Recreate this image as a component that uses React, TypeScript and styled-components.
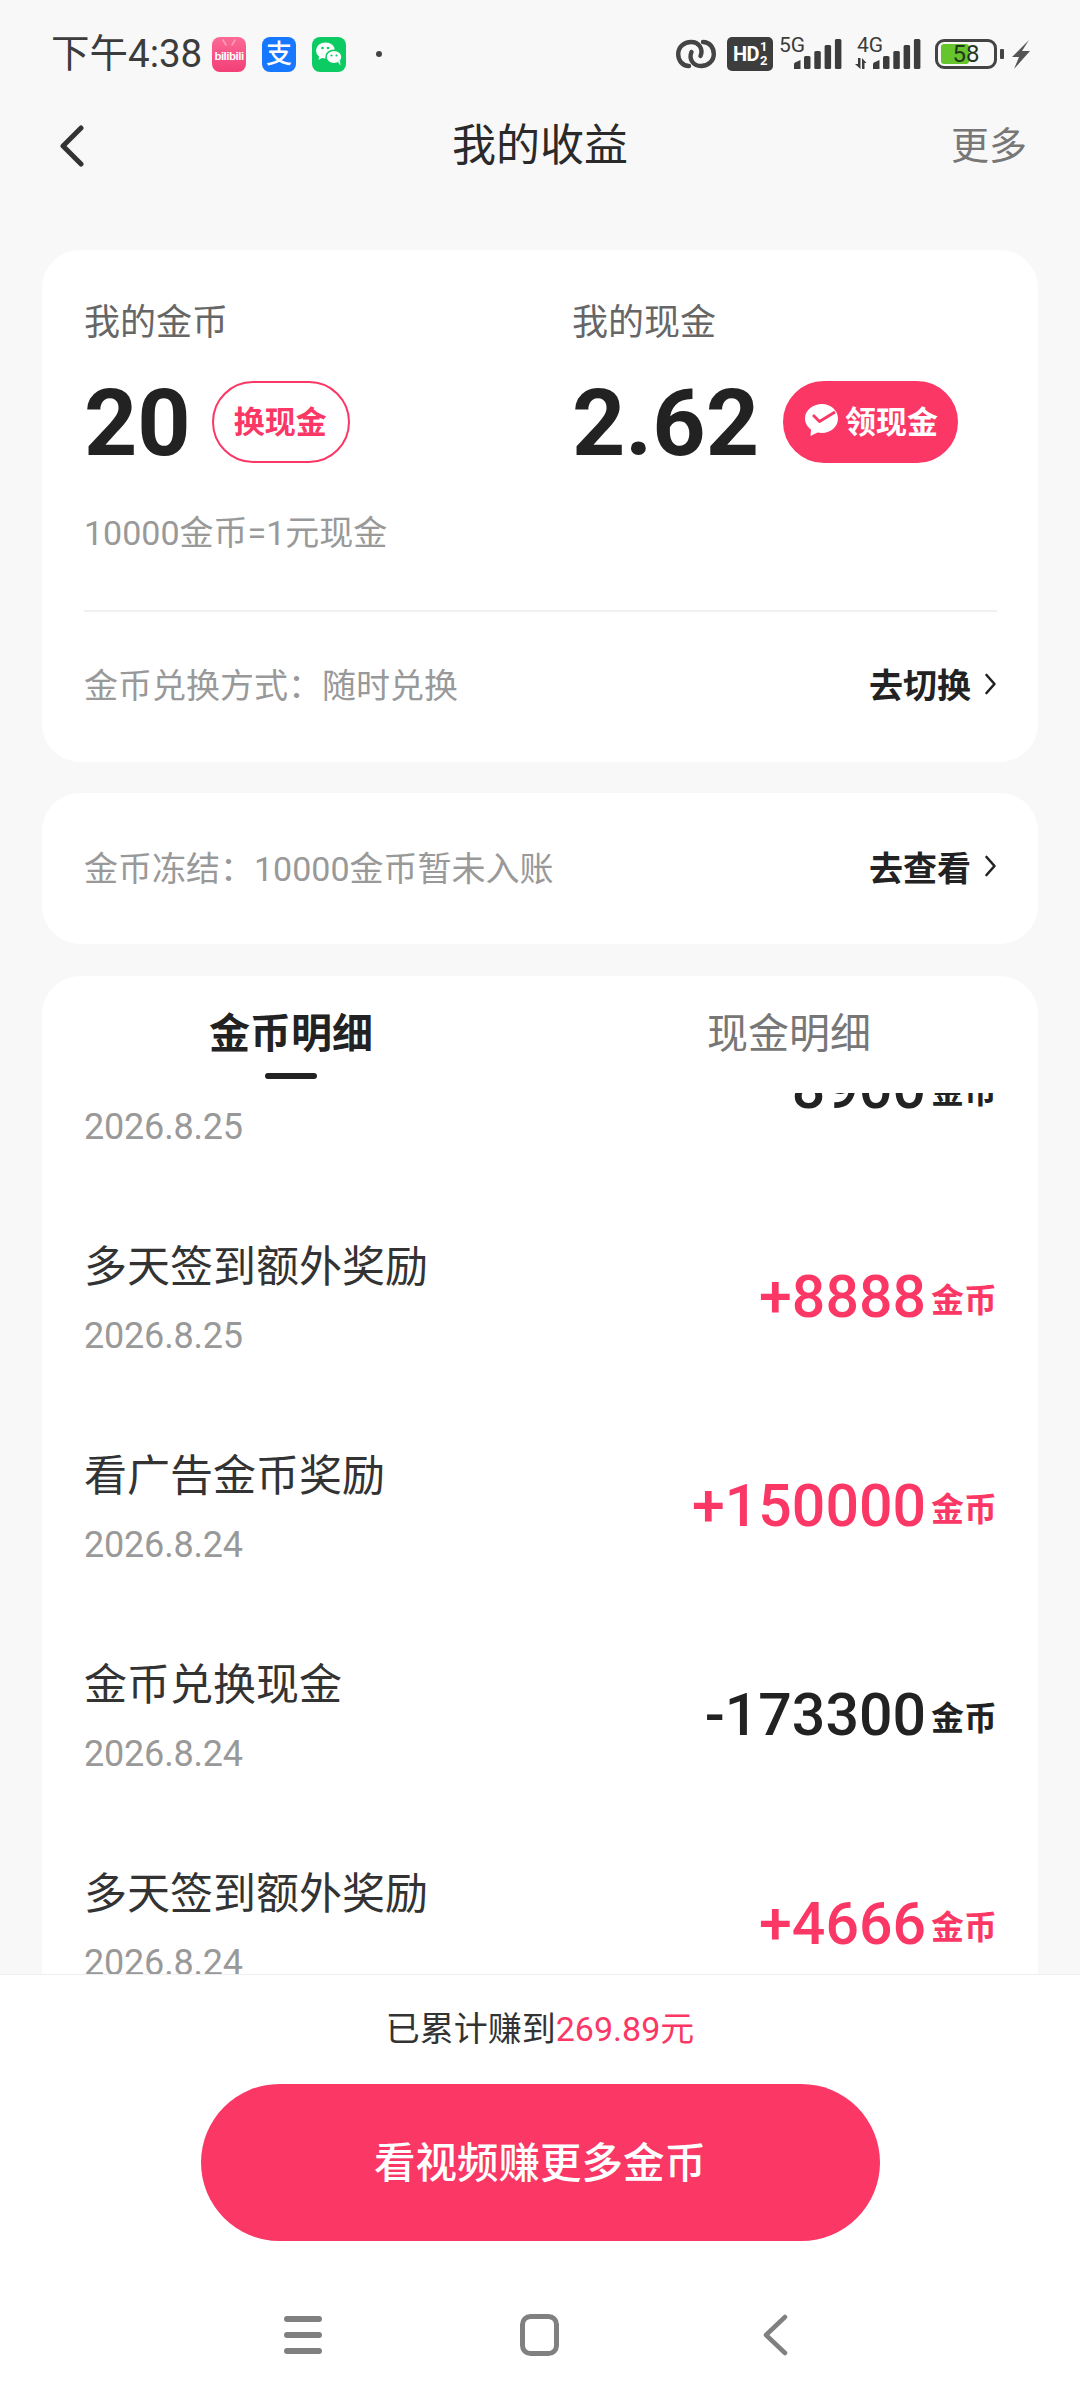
import React from 'react'
import styled, { createGlobalStyle } from 'styled-components'

const PINK = '#fb3766'
const STACK = 'Roboto, "Noto Sans CJK SC", sans-serif'

const Global = createGlobalStyle`
  html, body { margin: 0; padding: 0; background: #f8f8f8; }
  * { box-sizing: border-box; }
`

const Page = styled.div`
  width: 1080px;
  height: 2400px;
  display: flex;
  flex-direction: column;
  overflow: hidden;
  background: #f8f8f8;
  font-family: ${STACK};
  color: #333;
`

const StatusBar = styled.div`
  height: 108px;
  padding: 0 50px 0 51px;
  display: flex;
  align-items: center;
  justify-content: space-between;
`

const StatusLeft = styled.div`
  display: flex;
  align-items: center;
`

const StatusRight = styled.div`
  display: flex;
  align-items: center;
`

const Clock = styled.span`
  font-size: 38.5px;
  line-height: 44px;
  color: #3c3c3c;
  width: 161px;
  white-space: nowrap;
`

const AppIcon = styled.div<{ $bg: string; $gap?: number }>`
  width: 34px;
  height: 35px;
  border-radius: 8px;
  background: ${p => p.$bg};
  margin-right: ${p => p.$gap ?? 16}px;
  display: flex;
  align-items: center;
  justify-content: center;
  color: #fff;
  overflow: hidden;
`

const ZhiText = styled.span`
  font-size: 26px;
  font-weight: 500;
  line-height: 30px;
`

const Dot = styled.div`
  width: 6px;
  height: 6px;
  border-radius: 50%;
  background: #444;
  margin-left: 30px;
`

const LinkIcon = styled.svg`
  margin-right: 11px;
`

const HdBox = styled.div`
  width: 46px;
  height: 34px;
  margin-right: 6px;
  border-radius: 5px;
  background: #3d3d3d;
  color: #fff;
  display: flex;
  align-items: center;
  justify-content: center;
  font-size: 20px;
  font-weight: 700;
  letter-spacing: -0.5px;
`

const Half = styled.span`
  display: flex;
  flex-direction: column;
  font-size: 13px;
  line-height: 14px;
  margin-left: 1px;
`

const Signal = styled.div<{ $w: number; $gap: number }>`
  position: relative;
  width: ${p => p.$w}px;
  height: 34px;
  margin-right: ${p => p.$gap}px;
`

const NetLabel = styled.span<{ $left: number }>`
  position: absolute;
  left: ${p => p.$left}px;
  top: -2px;
  font-size: 21px;
  line-height: 20px;
  color: #3c3c3c;
  white-space: nowrap;
`

const SignalBars = styled.svg<{ $left: number }>`
  position: absolute;
  left: ${p => p.$left}px;
  top: 2px;
`

const Battery = styled.div`
  position: relative;
  width: 62px;
  height: 30px;
  border: 3.5px solid #444;
  border-radius: 9px;
  display: flex;
  align-items: center;
  justify-content: center;
`

const BatteryFill = styled.div<{ $pct: number }>`
  position: absolute;
  left: 3px;
  top: 2px;
  bottom: 2px;
  width: ${p => p.$pct}%;
  background: #66c42d;
  border-radius: 3px;
`

const BatteryText = styled.span`
  position: relative;
  font-size: 24px;
  line-height: 24px;
  color: #24361a;
`

const BatteryNub = styled.div`
  width: 4px;
  height: 10px;
  margin: 0 7px 0 3px;
  background: #444;
  border-radius: 1px;
`

const NavBar = styled.div`
  height: 74px;
  padding: 1px 53px 0 53px;
  display: grid;
  grid-template-columns: 1fr auto 1fr;
  align-items: center;
`

const BackIcon = styled.svg`
  margin-left: 7px;
`

const NavTitle = styled.h1`
  margin: 0;
  font-size: 44px;
  font-weight: 400;
  color: #2a2a2a;
  line-height: 60px;
`

const NavMore = styled.span`
  justify-self: end;
  font-size: 38px;
  color: #777;
  line-height: 50px;
`

const Content = styled.div`
  flex: 1;
  min-height: 0;
  padding: 68px 42px 0;
  display: flex;
  flex-direction: column;
  gap: 31px;
`

const Card = styled.section`
  background: #fff;
  border-radius: 38px;
  padding: 0 41px 0 42px;
`

const BalanceGrid = styled.div`
  padding-top: 53px;
  display: grid;
  grid-template-columns: 488px 1fr;
`

const Label = styled.div`
  font-size: 36px;
  line-height: 40px;
  color: #666;
`

const ValueRow = styled.div`
  margin-top: 38px;
  height: 82px;
  display: flex;
  align-items: center;
`

const BigNumber = styled.span`
  font-size: 93px;
  font-weight: 700;
  line-height: 82px;
  color: #222;
  padding-top: 4px;
`

const PillButton = styled.button<{ $solid?: boolean }>`
  height: 82px;
  margin-left: ${p => (p.$solid ? 24 : 21)}px;
  padding: 0 ${p => (p.$solid ? 18 : 21)}px 5px ${p => (p.$solid ? 19 : 20)}px;
  border-radius: 41px;
  border: 2px solid ${PINK};
  background: ${p => (p.$solid ? PINK : '#fff')};
  color: ${p => (p.$solid ? '#fff' : PINK)};
  font-family: ${STACK};
  font-size: 31px;
  font-weight: 700;
  display: flex;
  align-items: center;
  gap: 7px;
  white-space: nowrap;
`

const Rate = styled.div`
  margin-top: 50px;
  font-size: 34px;
  line-height: 40px;
  color: #999;
`

const Divider = styled.div`
  margin-top: 57px;
  height: 2px;
  background: #f0f0f0;
`

const LinkRow = styled.div<{ $h: number }>`
  height: ${p => p.$h}px;
  padding-bottom: ${p => (p.$h > 150 ? 5 : 7)}px;
  display: flex;
  align-items: center;
  justify-content: space-between;
`

const Hint = styled.span`
  font-size: 34px;
  color: #999;
`

const LinkAction = styled.span`
  display: flex;
  align-items: center;
  gap: 13px;
  font-size: 34px;
  font-weight: 700;
  color: #222;
`

const DetailCard = styled.section`
  flex: 1;
  min-height: 0;
  margin-top: 1px;
  background: #fff;
  border-radius: 38px 38px 0 0;
  display: flex;
  flex-direction: column;
`

const Tabs = styled.div`
  height: 117px;
  flex: none;
  display: flex;
`

const Tab = styled.div<{ $active?: boolean }>`
  flex: 1;
  padding-top: 33px;
  display: flex;
  flex-direction: column;
  align-items: center;
  font-size: 41px;
  line-height: 50px;
  font-weight: ${p => (p.$active ? 700 : 400)};
  color: ${p => (p.$active ? '#222' : '#777')};
`

const TabMark = styled.div`
  width: 52px;
  height: 6px;
  margin-top: 14px;
  border-radius: 3px;
  background: #222;
`

const List = styled.div`
  flex: 1;
  min-height: 0;
  overflow: hidden;
`

const ListInner = styled.div`
  margin-top: -110px;
`

const Row = styled.div`
  height: 209px;
  padding: 0 41px 0 42px;
  display: flex;
  align-items: center;
  justify-content: space-between;
`

const RowText = styled.div`
  padding-top: 4px;
  display: flex;
  flex-direction: column;
  gap: 14px;
`

const RowTitle = styled.div`
  font-size: 43px;
  line-height: 60px;
  color: #333;
`

const RowDate = styled.div`
  font-size: 36px;
  line-height: 50px;
  letter-spacing: -0.2px;
  color: #999;
`

const Amount = styled.div<{ $plus: boolean }>`
  display: flex;
  align-items: center;
  gap: 5px;
  color: ${p => (p.$plus ? PINK : '#222')};
  font-weight: 500;
`

const AmountValue = styled.span`
  font-size: 59px;
  line-height: 70px;
`

const AmountUnit = styled.span`
  font-size: 33px;
  line-height: 40px;
  margin-top: 8px;
  font-weight: 700;
`

const Footer = styled.footer`
  height: 426px;
  flex: none;
  border-top: 1px solid #eee;
  background: #fff;
  padding-top: 34px;
  display: flex;
  flex-direction: column;
  align-items: center;
`

const Earned = styled.div`
  font-size: 34px;
  line-height: 40px;
  color: #333;
`

const EarnedValue = styled.span`
  color: ${PINK};
`

const WatchButton = styled.button`
  margin-top: 35px;
  width: 679px;
  height: 157px;
  flex: none;
  border: 0;
  padding: 0 0 6px;
  border-radius: 79px;
  background: ${PINK};
  color: #fff;
  font-family: ${STACK};
  font-size: 41.5px;
  font-weight: 500;
`

const SystemNav = styled.nav`
  margin-top: 73px;
  align-self: stretch;
  padding-left: 284px;
  height: 42px;
  display: grid;
  grid-template-columns: 236px 242px 26px;
  align-items: center;
`

const Bars = () => (
  <>
    <path d="M0 30v-4.500c0-1 .5-1.500 1-2L6.500 21v9z" fill="#3c3c3c" />
    {[13, 18, 24, 30].map((h, i) => (
      <rect key={h} x={10 + i * 10.3} y={30 - h} width={6.5} height={h} rx={1.5} fill="#3c3c3c" />
    ))}
  </>
)

const rows = [
  { title: '金币兑换现金', date: '2026.8.25', amount: '-8900' },
  { title: '多天签到额外奖励', date: '2026.8.25', amount: '+8888' },
  { title: '看广告金币奖励', date: '2026.8.24', amount: '+150000' },
  { title: '金币兑换现金', date: '2026.8.24', amount: '-173300' },
  { title: '多天签到额外奖励', date: '2026.8.24', amount: '+4666' },
]

const Chevron = () => (
  <svg width="13" height="24" viewBox="0 0 13 24" fill="none">
    <path d="M2.500 3l8 9-8 9" stroke="#222" strokeWidth="2.600" strokeLinecap="round" strokeLinejoin="round" />
  </svg>
)

const App: React.FC = () => (
  <Page>
    <Global />
    <StatusBar>
      <StatusLeft>
        <Clock>下午4:38</Clock>
        <AppIcon $bg="linear-gradient(#fb6a96, #f23f77)">
          <svg width="34" height="35" viewBox="0 0 34 35">
            <path d="M11 3l3 5M23 3l-3 5" stroke="#ff9dbb" strokeWidth="1.500" strokeLinecap="round" />
            <text x="17" y="23" textAnchor="middle" fontSize="11.500" fontWeight="700" fontFamily="Liberation Sans, sans-serif" fill="#fff" letterSpacing="-0.500">bilibili</text>
          </svg>
        </AppIcon>
        <AppIcon $bg="#1677ff">
          <ZhiText>支</ZhiText>
        </AppIcon>
        <AppIcon $bg="#0ccb63" $gap={0}>
          <svg width="30" height="28" viewBox="0 0 30 28" fill="#fff">
            <ellipse cx="11.500" cy="10.500" rx="9.500" ry="8" />
            <path d="M5.500 15l-1 5 5-3z" />
            <ellipse cx="20" cy="17" rx="8" ry="6.800" stroke="#0ccb63" strokeWidth="1.500" />
            <path d="M24 22l2.500 3.500-.5-5z" />
            <circle cx="8.500" cy="8" r="1.300" fill="#0ccb63" />
            <circle cx="14" cy="8" r="1.300" fill="#0ccb63" />
            <circle cx="17.500" cy="15.500" r="1.100" fill="#0ccb63" />
            <circle cx="22.500" cy="15.500" r="1.100" fill="#0ccb63" />
          </svg>
        </AppIcon>
        <Dot />
      </StatusLeft>
      <StatusRight>
        <LinkIcon width="40" height="30" viewBox="0 0 40 30" fill="none" stroke="#444" strokeWidth="4.400" strokeLinecap="round">
          <path d="M13 27C6 27 2.200 21 2.200 15 2.200 8 8 3 15 3c8 0 12.500 7 9.500 14" />
          <path d="M27 3c7 0 10.800 6 10.800 12 0 7-5.800 12-12.800 12-8 0-12.500-7-9.500-14" />
        </LinkIcon>
        <HdBox>
          HD
          <Half>
            <span>1</span>
            <span>2</span>
          </Half>
        </HdBox>
        <Signal $w={63} $gap={13}>
          <NetLabel $left={0}>5G</NetLabel>
          <SignalBars $left={15} width="48" height="30" viewBox="0 0 48 30">
            <Bars />
          </SignalBars>
        </Signal>
        <Signal $w={66} $gap={14}>
          <NetLabel $left={2}>4G</NetLabel>
          <SignalBars $left={0} width="66" height="30" viewBox="0 0 66 30">
            <path d="M3 19h2.500v11L0 25h3zM7 30V19l4.500 5H9.500v6z" fill="#3c3c3c" />
            <g transform="translate(18 0)">
              <Bars />
            </g>
          </SignalBars>
        </Signal>
        <Battery>
          <BatteryFill $pct={50} />
          <BatteryText>58</BatteryText>
        </Battery>
        <BatteryNub />
        <svg width="19" height="29" viewBox="0 0 19 29" fill="#555">
          <path d="M18 0L1 17h7L3 29l16-18h-8z" />
        </svg>
      </StatusRight>
    </StatusBar>
    <NavBar>
      <BackIcon width="24" height="42" viewBox="0 0 24 42" fill="none">
        <path d="M21 3L3 21l18 18" stroke="#333" strokeWidth="5" strokeLinecap="round" strokeLinejoin="round" />
      </BackIcon>
      <NavTitle>我的收益</NavTitle>
      <NavMore>更多</NavMore>
    </NavBar>
    <Content>
      <Card>
        <BalanceGrid>
          <div>
            <Label>我的金币</Label>
            <ValueRow>
              <BigNumber>20</BigNumber>
              <PillButton>换现金</PillButton>
            </ValueRow>
          </div>
          <div>
            <Label>我的现金</Label>
            <ValueRow>
              <BigNumber>2.62</BigNumber>
              <PillButton $solid>
                <svg width="34" height="32" viewBox="0 0 34 32">
                  <path d="M18 0C8.500 0 1 6.500 1 14.500c0 4.500 2.300 8.500 6 11L6.500 32l7-3.500c1.400.3 3 .5 4.500.5 9 0 16-6.500 16-14.500S27 0 18 0z" fill="#fff" />
                  <path d="M9 11l6.500 6.500L31 8" fill="none" stroke={PINK} strokeWidth="2.800" strokeLinejoin="round" />
                </svg>
                领现金
              </PillButton>
            </ValueRow>
          </div>
        </BalanceGrid>
        <Rate>10000金币=1元现金</Rate>
        <Divider />
        <LinkRow $h={150}>
          <Hint>金币兑换方式：随时兑换</Hint>
          <LinkAction>
            去切换
            <Chevron />
          </LinkAction>
        </LinkRow>
      </Card>
      <Card>
        <LinkRow $h={151}>
          <Hint>金币冻结：10000金币暂未入账</Hint>
          <LinkAction>
            去查看
            <Chevron />
          </LinkAction>
        </LinkRow>
      </Card>
      <DetailCard>
        <Tabs>
          <Tab $active>
            金币明细
            <TabMark />
          </Tab>
          <Tab>现金明细</Tab>
        </Tabs>
        <List>
          <ListInner>
            {rows.map(r => (
              <Row key={r.title + r.amount}>
                <RowText>
                  <RowTitle>{r.title}</RowTitle>
                  <RowDate>{r.date}</RowDate>
                </RowText>
                <Amount $plus={r.amount.startsWith('+')}>
                  <AmountValue>{r.amount}</AmountValue>
                  <AmountUnit>金币</AmountUnit>
                </Amount>
              </Row>
            ))}
          </ListInner>
        </List>
      </DetailCard>
    </Content>
    <Footer>
      <Earned>
        已累计赚到<EarnedValue>269.89元</EarnedValue>
      </Earned>
      <WatchButton>看视频赚更多金币</WatchButton>
      <SystemNav>
        <svg width="38" height="38" viewBox="0 0 38 38" stroke="#808080" strokeWidth="6" strokeLinecap="round">
          <path d="M3 3h32M3 19h32M3 35h32" />
        </svg>
        <svg width="39" height="42" viewBox="0 0 39 42" fill="none">
          <rect x="2.500" y="2.500" width="34" height="37" rx="8" stroke="#808080" strokeWidth="5" />
        </svg>
        <svg width="26" height="42" viewBox="0 0 26 42" fill="none">
          <path d="M23 3L4 21l19 18" stroke="#808080" strokeWidth="4.500" strokeLinecap="round" strokeLinejoin="round" />
        </svg>
      </SystemNav>
    </Footer>
  </Page>
)

export default App
